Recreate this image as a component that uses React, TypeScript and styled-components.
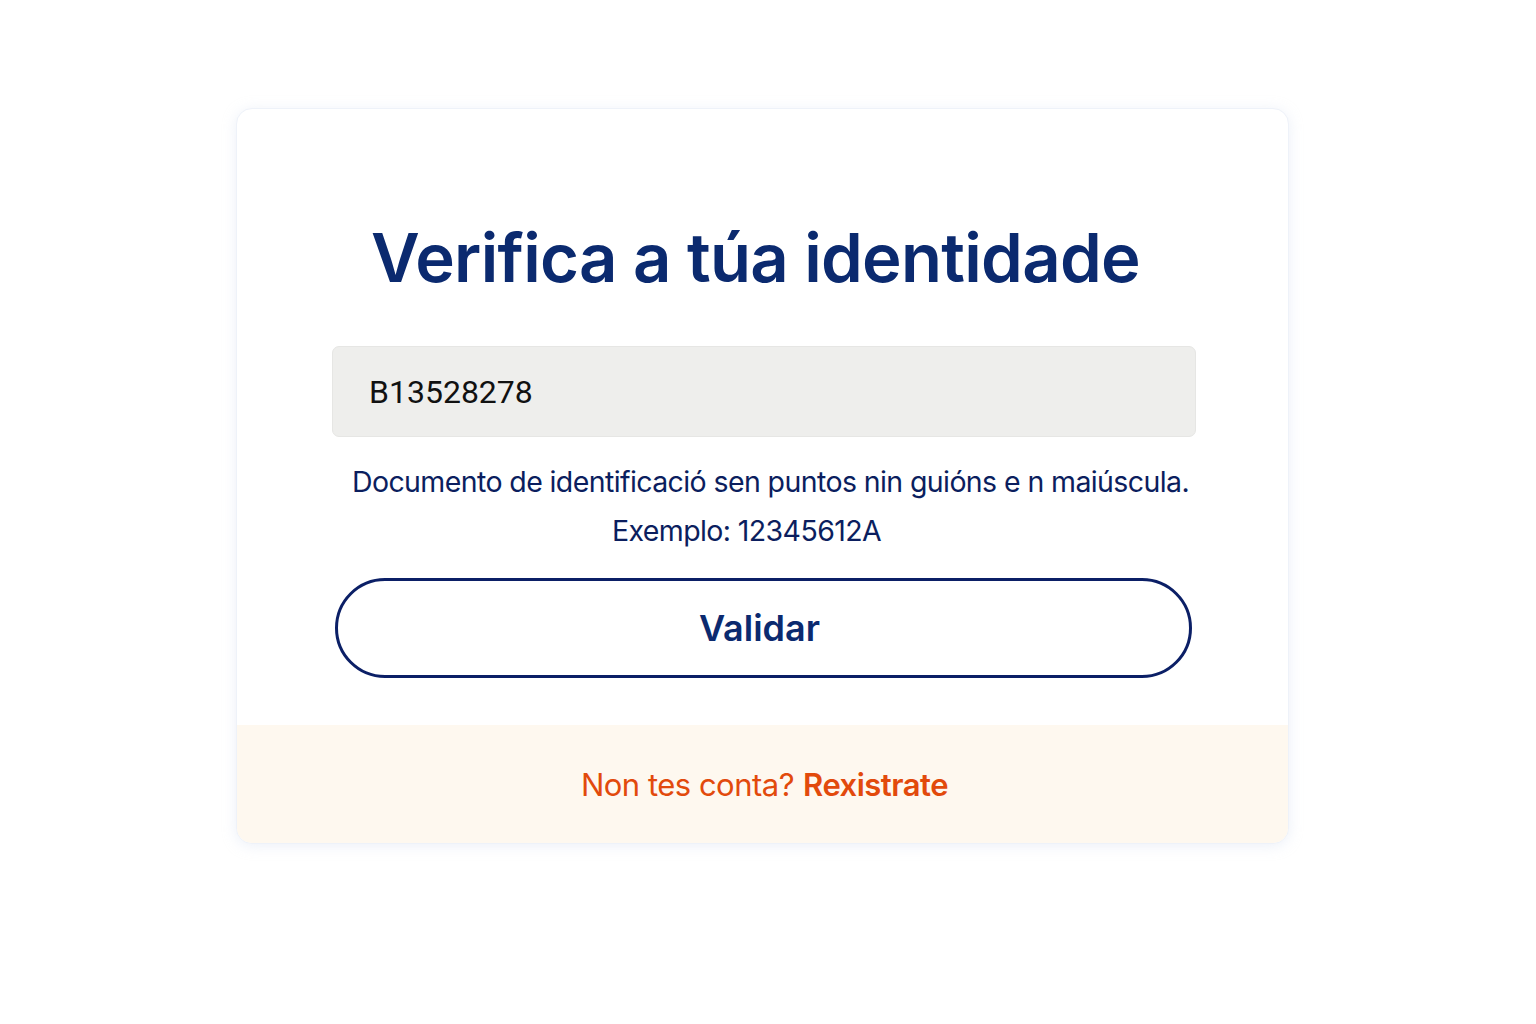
import React from "react";
import styled, { createGlobalStyle } from "styled-components";

const Global = createGlobalStyle`
  html, body { margin: 0; padding: 0; background: #ffffff; }
  body { font-family: Inter, "Noto Sans", sans-serif; }
  * { box-sizing: border-box; }
`;

const Page = styled.div`
  width: 1536px;
  min-height: 1024px;
  display: flex;
  justify-content: flex-start;
  align-items: flex-start;
  padding-top: 108px;
  padding-left: 236px;
`;

const Card = styled.div`
  width: 1053px;
  background: #ffffff;
  border-radius: 16px;
  border: 1px solid #eef2f9;
  box-shadow: 0 2px 14px rgba(200, 212, 235, 0.35);
  overflow: hidden;
  display: flex;
  flex-direction: column;
`;

const Body = styled.div`
  padding: 104px 93px 47px 95px;
  display: flex;
  flex-direction: column;
  align-items: stretch;
`;

const Title = styled.h1`
  margin: 0 0 43px 0;
  padding-right: 16px;
  text-align: center;
  font-family: Inter, "Noto Sans", sans-serif;
  font-weight: 600;
  font-size: 67px;
  line-height: 90px;
  letter-spacing: -0.7px;
  color: #0b2a6f;
`;

const Field = styled.input`
  width: 864px;
  height: 91px;
  border: 1px solid #e6e6e4;
  border-radius: 7px;
  background: #eeeeec;
  padding: 0 36px;
  font-family: Roboto, "Liberation Sans", sans-serif;
  font-size: 32px;
  color: #111111;
  outline: none;
`;

const Help = styled.p`
  margin: 20px 0 0 0;
  padding-left: 14px;
  text-align: center;
  font-family: Inter, "Noto Sans", sans-serif;
  font-size: 28.5px;
  line-height: 49px;
  letter-spacing: -0.6px;
  color: #0b1e5e;
`;

const HelpLine = styled.span<{ $shift?: number }>`
  display: block;
  padding-right: ${(p) => p.$shift ?? 0}px;
`;

const Button = styled.button`
  margin: 23px 0 0 3px;
  width: 857px;
  height: 100px;
  padding: 0 8px 0 0;
  border: 3px solid #0b1f66;
  border-radius: 50px;
  background: #ffffff;
  font-family: Inter, "Noto Sans", sans-serif;
  font-weight: 600;
  font-size: 36px;
  color: #0b2a6f;
  cursor: pointer;
`;

const Footer = styled.div`
  height: 118px;
  background: #fef8ef;
  display: flex;
  align-items: center;
  justify-content: center;
  padding-left: 4px;
  font-family: Inter, "Noto Sans", sans-serif;
  font-size: 31px;
  letter-spacing: -0.5px;
  color: #e24a0c;
`;

const Link = styled.a`
  margin-left: 9px;
  font-weight: 600;
  color: #e24a0c;
  text-decoration: none;
`;

export default function App() {
  return (
    <>
      <Global />
      <Page>
        <Card>
          <Body>
            <Title>Verifica a túa identidade</Title>
            <Field defaultValue="B13528278" />
            <Help>
              <HelpLine>Documento de identificació sen puntos nin guións e n maiúscula.</HelpLine>
              <HelpLine $shift={48}>Exemplo: 12345612A</HelpLine>
            </Help>
            <Button>Validar</Button>
          </Body>
          <Footer>
            Non tes conta?<Link href="#">Rexistrate</Link>
          </Footer>
        </Card>
      </Page>
    </>
  );
}
